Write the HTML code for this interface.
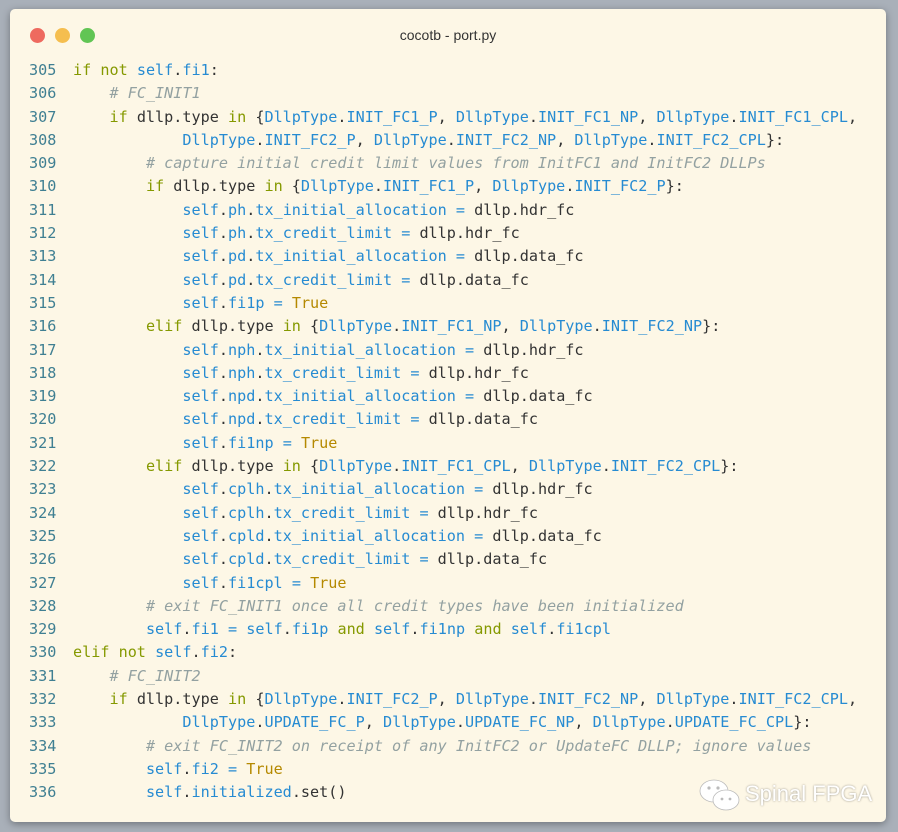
<!DOCTYPE html>
<html><head><meta charset="utf-8"><style>
html,body{margin:0;padding:0;width:898px;height:832px;background:#a9b0b9;overflow:hidden}
.win{position:absolute;left:10px;top:9px;width:876px;height:813px;background:#fdf7e6;border-radius:5px;box-shadow:0 2px 8px rgba(0,0,0,.35)}
.dot{position:absolute;top:19px;width:15px;height:15px;border-radius:50%}
.title{position:absolute;top:18px;left:0;width:876px;text-align:center;font:14px "Liberation Sans",sans-serif;color:#333}
pre{position:absolute;left:19px;top:50px;margin:0;font-family:"DejaVu Sans Mono","Liberation Mono",monospace;font-size:15.15px;line-height:23.29px;color:#333}
.n{color:#3f7f92;display:inline-block;width:44px}
.k{color:#859900}.b{color:#268bd2}.c{color:#93a1a1;font-style:italic}.t{color:#b58900}
.wm{position:absolute;top:781px;font:22px "Liberation Sans",sans-serif;color:#fff;text-shadow:0 0 2px rgba(0,0,0,.4)}
</style></head><body>
<div class="win">
<div class="dot" style="left:20px;background:#ee6a5f"></div>
<div class="dot" style="left:45px;background:#f5be4f"></div>
<div class="dot" style="left:70px;background:#61c554"></div>
<div class="title">cocotb - port.py</div>
<pre><span class="n">305</span><span class="k">if not</span> <span class="b">self</span>.<span class="b">fi1</span>:
<span class="n">306</span>    <span class="c"># FC_INIT1</span>
<span class="n">307</span>    <span class="k">if</span> dllp.type <span class="k">in</span> {<span class="b">DllpType</span>.<span class="b">INIT_FC1_P</span>, <span class="b">DllpType</span>.<span class="b">INIT_FC1_NP</span>, <span class="b">DllpType</span>.<span class="b">INIT_FC1_CPL</span>,
<span class="n">308</span>            <span class="b">DllpType</span>.<span class="b">INIT_FC2_P</span>, <span class="b">DllpType</span>.<span class="b">INIT_FC2_NP</span>, <span class="b">DllpType</span>.<span class="b">INIT_FC2_CPL</span>}:
<span class="n">309</span>        <span class="c"># capture initial credit limit values from InitFC1 and InitFC2 DLLPs</span>
<span class="n">310</span>        <span class="k">if</span> dllp.type <span class="k">in</span> {<span class="b">DllpType</span>.<span class="b">INIT_FC1_P</span>, <span class="b">DllpType</span>.<span class="b">INIT_FC2_P</span>}:
<span class="n">311</span>            <span class="b">self</span>.<span class="b">ph</span>.<span class="b">tx_initial_allocation</span> <span class="b">=</span> dllp.hdr_fc
<span class="n">312</span>            <span class="b">self</span>.<span class="b">ph</span>.<span class="b">tx_credit_limit</span> <span class="b">=</span> dllp.hdr_fc
<span class="n">313</span>            <span class="b">self</span>.<span class="b">pd</span>.<span class="b">tx_initial_allocation</span> <span class="b">=</span> dllp.data_fc
<span class="n">314</span>            <span class="b">self</span>.<span class="b">pd</span>.<span class="b">tx_credit_limit</span> <span class="b">=</span> dllp.data_fc
<span class="n">315</span>            <span class="b">self</span>.<span class="b">fi1p</span> <span class="b">=</span> <span class="t">True</span>
<span class="n">316</span>        <span class="k">elif</span> dllp.type <span class="k">in</span> {<span class="b">DllpType</span>.<span class="b">INIT_FC1_NP</span>, <span class="b">DllpType</span>.<span class="b">INIT_FC2_NP</span>}:
<span class="n">317</span>            <span class="b">self</span>.<span class="b">nph</span>.<span class="b">tx_initial_allocation</span> <span class="b">=</span> dllp.hdr_fc
<span class="n">318</span>            <span class="b">self</span>.<span class="b">nph</span>.<span class="b">tx_credit_limit</span> <span class="b">=</span> dllp.hdr_fc
<span class="n">319</span>            <span class="b">self</span>.<span class="b">npd</span>.<span class="b">tx_initial_allocation</span> <span class="b">=</span> dllp.data_fc
<span class="n">320</span>            <span class="b">self</span>.<span class="b">npd</span>.<span class="b">tx_credit_limit</span> <span class="b">=</span> dllp.data_fc
<span class="n">321</span>            <span class="b">self</span>.<span class="b">fi1np</span> <span class="b">=</span> <span class="t">True</span>
<span class="n">322</span>        <span class="k">elif</span> dllp.type <span class="k">in</span> {<span class="b">DllpType</span>.<span class="b">INIT_FC1_CPL</span>, <span class="b">DllpType</span>.<span class="b">INIT_FC2_CPL</span>}:
<span class="n">323</span>            <span class="b">self</span>.<span class="b">cplh</span>.<span class="b">tx_initial_allocation</span> <span class="b">=</span> dllp.hdr_fc
<span class="n">324</span>            <span class="b">self</span>.<span class="b">cplh</span>.<span class="b">tx_credit_limit</span> <span class="b">=</span> dllp.hdr_fc
<span class="n">325</span>            <span class="b">self</span>.<span class="b">cpld</span>.<span class="b">tx_initial_allocation</span> <span class="b">=</span> dllp.data_fc
<span class="n">326</span>            <span class="b">self</span>.<span class="b">cpld</span>.<span class="b">tx_credit_limit</span> <span class="b">=</span> dllp.data_fc
<span class="n">327</span>            <span class="b">self</span>.<span class="b">fi1cpl</span> <span class="b">=</span> <span class="t">True</span>
<span class="n">328</span>        <span class="c"># exit FC_INIT1 once all credit types have been initialized</span>
<span class="n">329</span>        <span class="b">self</span>.<span class="b">fi1</span> <span class="b">=</span> <span class="b">self</span>.<span class="b">fi1p</span> <span class="k">and</span> <span class="b">self</span>.<span class="b">fi1np</span> <span class="k">and</span> <span class="b">self</span>.<span class="b">fi1cpl</span>
<span class="n">330</span><span class="k">elif not</span> <span class="b">self</span>.<span class="b">fi2</span>:
<span class="n">331</span>    <span class="c"># FC_INIT2</span>
<span class="n">332</span>    <span class="k">if</span> dllp.type <span class="k">in</span> {<span class="b">DllpType</span>.<span class="b">INIT_FC2_P</span>, <span class="b">DllpType</span>.<span class="b">INIT_FC2_NP</span>, <span class="b">DllpType</span>.<span class="b">INIT_FC2_CPL</span>,
<span class="n">333</span>            <span class="b">DllpType</span>.<span class="b">UPDATE_FC_P</span>, <span class="b">DllpType</span>.<span class="b">UPDATE_FC_NP</span>, <span class="b">DllpType</span>.<span class="b">UPDATE_FC_CPL</span>}:
<span class="n">334</span>        <span class="c"># exit FC_INIT2 on receipt of any InitFC2 or UpdateFC DLLP; ignore values</span>
<span class="n">335</span>        <span class="b">self</span>.<span class="b">fi2</span> <span class="b">=</span> <span class="t">True</span>
<span class="n">336</span>        <span class="b">self</span>.<span class="b">initialized</span>.set()</pre>
</div>
<svg style="position:absolute;left:699px;top:778px" width="44" height="36" viewBox="0 0 44 36">
<ellipse cx="15" cy="13" rx="14" ry="11" fill="#fff" stroke="#bbb" stroke-width="0.8"/>
<ellipse cx="27" cy="22" rx="13" ry="10" fill="#fff" stroke="#bbb" stroke-width="0.8"/>
<circle cx="10" cy="10" r="1.6" fill="#bbb"/><circle cx="19" cy="10" r="1.6" fill="#bbb"/>
<circle cx="23" cy="21" r="1.4" fill="#bbb"/><circle cx="31" cy="21" r="1.4" fill="#bbb"/>
</svg>
<div class="wm" style="left:745px">Spinal FPGA</div>
</body></html>
